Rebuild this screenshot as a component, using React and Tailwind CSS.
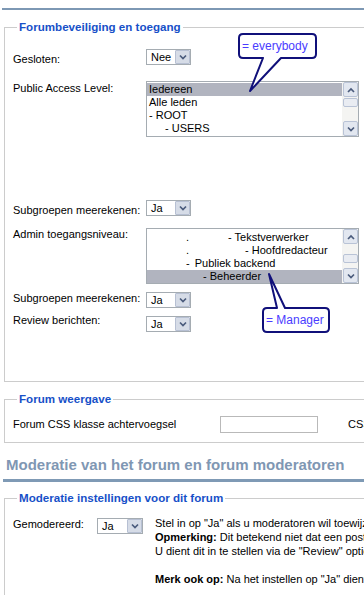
import React from "react";

const Chevron = ({ up = false }) => (
  <svg width="8" height="6" viewBox="0 0 8 6">
    <path
      d={up ? "M1 5 L4 2 L7 5" : "M1 1.5 L4 4.5 L7 1.5"}
      fill="none"
      stroke="#4a5b7c"
      strokeWidth="1.7"
    />
  </svg>
);

const Select = ({ value, width = "w-[45px]" }) => (
  <div className={`flex h-[16px] ${width} border border-[#a5acb2] bg-white`}>
    <span className="flex-1 pl-[4px] text-[11px] leading-[14px] text-black">{value}</span>
    <span className="flex h-[14px] w-[15px] items-center justify-center rounded-[1px] border border-[#b7c0d3] bg-[#d6dce7]">
      <Chevron />
    </span>
  </div>
);

const ScrollButton = ({ up }) => (
  <div className="flex h-[15px] w-[15px] items-center justify-center rounded-[2px] border border-[#b9c3d6] bg-[#e2e7f0]">
    <Chevron up={up} />
  </div>
);

const Scrollbar = ({ thumb }) => (
  <div className="flex w-[16px] flex-col justify-between bg-[#f4f4f2] pl-[1px]">
    <div>
      <ScrollButton up />
      <div className={`${thumb} h-[9px] w-[15px] rounded-[2px] border border-[#b9c3d6] bg-[#e9ecf2]`} />
    </div>
    <ScrollButton />
  </div>
);

const Listbox = ({ children, thumb }) => (
  <div className="flex h-[56px] w-[213px] overflow-hidden border border-[#a5acb2] bg-white">
    <div className="flex-1 overflow-hidden whitespace-nowrap pt-[1px] text-[11px] leading-[13px]">
      {children}
    </div>
    <Scrollbar thumb={thumb} />
  </div>
);

const Label = ({ children, className = "" }) => (
  <div className={`w-[133px] shrink-0 text-[11px] leading-[13px] ${className}`}>{children}</div>
);

const Legend = ({ children }) => (
  <legend className="ml-[4px] px-[2px] text-[11.6px] font-bold leading-[14px] text-[#1750c8]">
    {children}
  </legend>
);

export default function App() {
  return (
    <div className="relative h-[595px] w-[364px] overflow-hidden bg-white font-['Liberation_Sans',Arial,sans-serif] text-black">
      <div className="ml-[2px] mt-[8px] h-[2px] w-[400px] bg-[#7d98b4]" />

      {/* Forumbeveiliging en toegang */}
      <fieldset className="ml-[4px] mt-[10px] w-[700px] border border-[#cccccc] pb-[49px] pl-[8px]">
        <Legend>Forumbeveiliging en toegang</Legend>

        <div className="mt-[15px] flex">
          <Label className="pt-[4px]">Gesloten:</Label>
          <Select value="Nee" />
        </div>

        <div className="mt-[15px] flex">
          <Label className="pt-[1px]">Public Access Level:</Label>
          <Listbox thumb="mt-[1px]">
            <div className="bg-[#b1b4bf] pl-[2px]">Iedereen</div>
            <div className="pl-[2px]">Alle leden</div>
            <div className="pl-[2px]">- ROOT</div>
            <div className="pl-[18px]">- USERS</div>
          </Listbox>
        </div>

        <div className="mt-[63px] flex">
          <Label className="pt-[4px]">Subgroepen meerekenen:</Label>
          <Select value="Ja" />
        </div>

        <div className="mt-[11px] flex">
          <Label>Admin toegangsniveau:</Label>
          <Listbox thumb="mt-[10px]">
            <div className="pt-[1px] pl-[39px]">
              .<span className="ml-[39px]">- Tekstverwerker</span>
            </div>
            <div className="pl-[39px]">
              .<span className="ml-[56px]">- Hoofdredacteur</span>
            </div>
            <div className="pl-[39px]">
              -<span className="ml-[5px]">Publiek backend</span>
            </div>
            <div className="bg-[#b1b4bf] pl-[56px]">- Beheerder</div>
          </Listbox>
        </div>

        <div className="mt-[8px] flex">
          <Label>Subgroepen meerekenen:</Label>
          <Select value="Ja" />
        </div>

        <div className="mt-[8px] flex">
          <Label className="-mt-[2px]">Review berichten:</Label>
          <Select value="Ja" />
        </div>
      </fieldset>

      {/* Forum weergave */}
      <fieldset className="ml-[4px] mt-[10px] w-[700px] border border-[#cccccc] pb-[9px] pl-[8px]">
        <Legend>Forum weergave</Legend>
        <div className="mt-[10px] flex text-[11px] leading-[13px]">
          <div className="w-[207px] shrink-0 pt-[2px]">Forum CSS klasse achtervoegsel</div>
          <div className="h-[17px] w-[98px] border border-[#b9b9b9] bg-white" />
          <div className="ml-[30px] pt-[2px]">CSS</div>
        </div>
      </fieldset>

      <div className="mt-[13px] whitespace-nowrap pl-[6px] text-[15px] font-bold leading-[17px] text-[#7f97b3]">
        Moderatie van het forum en forum moderatoren
      </div>
      <div className="ml-[3px] mt-[6px] h-[3px] w-[400px] bg-[#7f9ab5]" />

      {/* Moderatie instellingen */}
      <fieldset className="ml-[4px] mt-[9px] w-[700px] border border-[#cccccc] pb-[20px] pl-[8px]">
        <Legend>Moderatie instellingen voor dit forum</Legend>
        <div className="mt-[13px] flex items-start text-[11px] leading-[13px]">
          <div className="w-[84px] shrink-0">Gemodereerd:</div>
          <Select value="Ja" width="w-[46px]" />
          <div className="-mt-[2px] ml-[12px] whitespace-nowrap leading-[14px]">
            <div>Stel in op "Ja" als u moderatoren wil toewijzen aan dit forum.</div>
            <div>
              <b>Opmerking:</b> Dit betekend niet dat een post eerst goedgekeurd moet worden.
            </div>
            <div>U dient dit in te stellen via de "Review" optie hierboven.</div>
            <div className="h-[14px]" />
            <div>
              <b>Merk ook op:</b> Na het instellen op "Ja" dient u de moderatoren toe te wijzen.
            </div>
          </div>
        </div>
      </fieldset>

      {/* Callouts */}
      <svg className="pointer-events-none absolute left-0 top-0" width="364" height="595">
        <path
          d="M243 34 H312 Q316 34 316 38 V54 Q316 58 312 58 H281 L250 91 L263 58 H243 Q239 58 239 54 V38 Q239 34 243 34 Z"
          fill="white"
          stroke="#10107a"
          strokeWidth="2"
          strokeLinejoin="round"
        />
        <path
          d="M267 308 H277 L269 274 L285 308 H325 Q329 308 329 312 V328 Q329 332 325 332 H267 Q263 332 263 328 V312 Q263 308 267 308 Z"
          fill="white"
          stroke="#10107a"
          strokeWidth="2"
          strokeLinejoin="round"
        />
      </svg>
      <span className="absolute left-[242px] top-[39px] text-[12px] leading-[14px] text-[#4a3cff]">
        = everybody
      </span>
      <span className="absolute left-[266px] top-[313px] text-[12px] leading-[14px] text-[#4a3cff]">
        = Manager
      </span>
    </div>
  );
}
